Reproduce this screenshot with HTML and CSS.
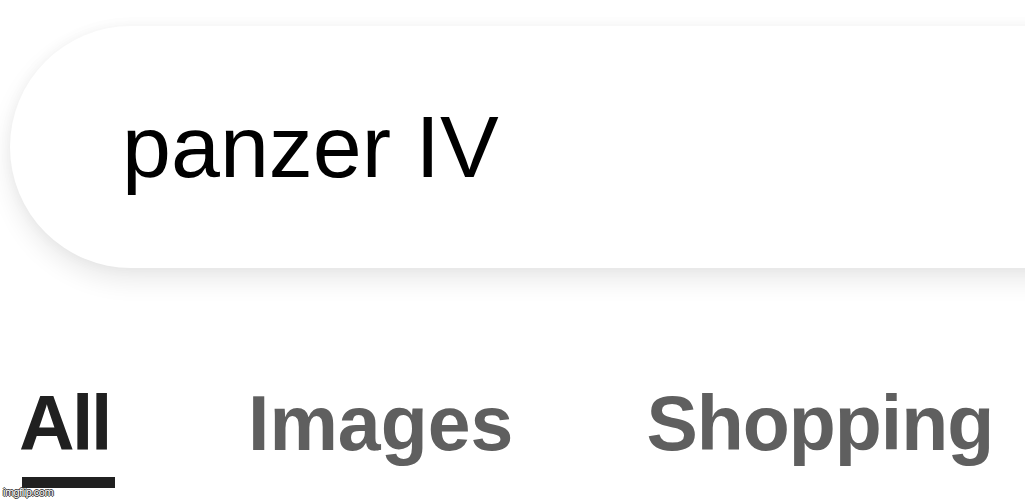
FILE: index.html
```html
<!DOCTYPE html>
<html lang="en">
<head>
    <meta charset="UTF-8">
    <meta name="viewport" content="width=device-width, initial-scale=1.0">
    <title>panzer IV - Search</title>
    <link rel="stylesheet" href="styles.css">
</head>
<body>
    <!-- Search field -->
    <div class="search-box">
        <span class="query">panzer IV</span>
    </div>

    <!-- Result tabs -->
    <nav class="tabs">
        <div class="tab active">
            <span>All</span>
            <div class="underline"></div>
        </div>
        <div class="tab images"><span>Images</span></div>
        <div class="tab"><span>Shopping</span></div>
    </nav>

    <div class="watermark">imgflip.com</div>
</body>
</html>
```

FILE: styles.css
```css
html, body {
    margin: 0;
    padding: 0;
    background-color: #ffffff;
    overflow: hidden;
}
body {
    position: relative;
    width: 1025px;
    height: 500px;
    font-family: "Liberation Sans", Arial, sans-serif;
}
.search-box {
    margin: 26px 0 0 10px;
    width: 1200px;
    height: 242px;
    border-radius: 121px;
    background-color: #ffffff;
    box-shadow: 0 12px 26px rgba(0, 0, 0, 0.09), 0 0 14px rgba(0, 0, 0, 0.04);
    padding-left: 112px;
    box-sizing: border-box;
    line-height: 242px;
}
.query {
    font-size: 88px;
    color: #000000;
}
.tabs {
    display: flex;
    gap: 133px;
    margin-top: 117px;
    padding-left: 19px;
}
.tab {
    display: flex;
    flex-direction: column;
    font-size: 77px;
    font-weight: bold;
    line-height: 1;
    letter-spacing: -1px;
    color: #5f5f5f;
}
.tab.images {
    letter-spacing: 0;
}
.tab.active {
    color: #202020;
    letter-spacing: -2.5px;
}
.underline {
    width: 93px;
    height: 11px;
    margin: 15px 0 0 3px;
    background-color: #202020;
}
.watermark {
    position: absolute;
    left: 3px;
    bottom: 2px;
    font-size: 11px;
    color: #ffffff;
    letter-spacing: -0.5px;
    text-shadow: 1px 0 0 #333, -1px 0 0 #333, 0 1px 0 #333, 0 -1px 0 #333;
}
```
